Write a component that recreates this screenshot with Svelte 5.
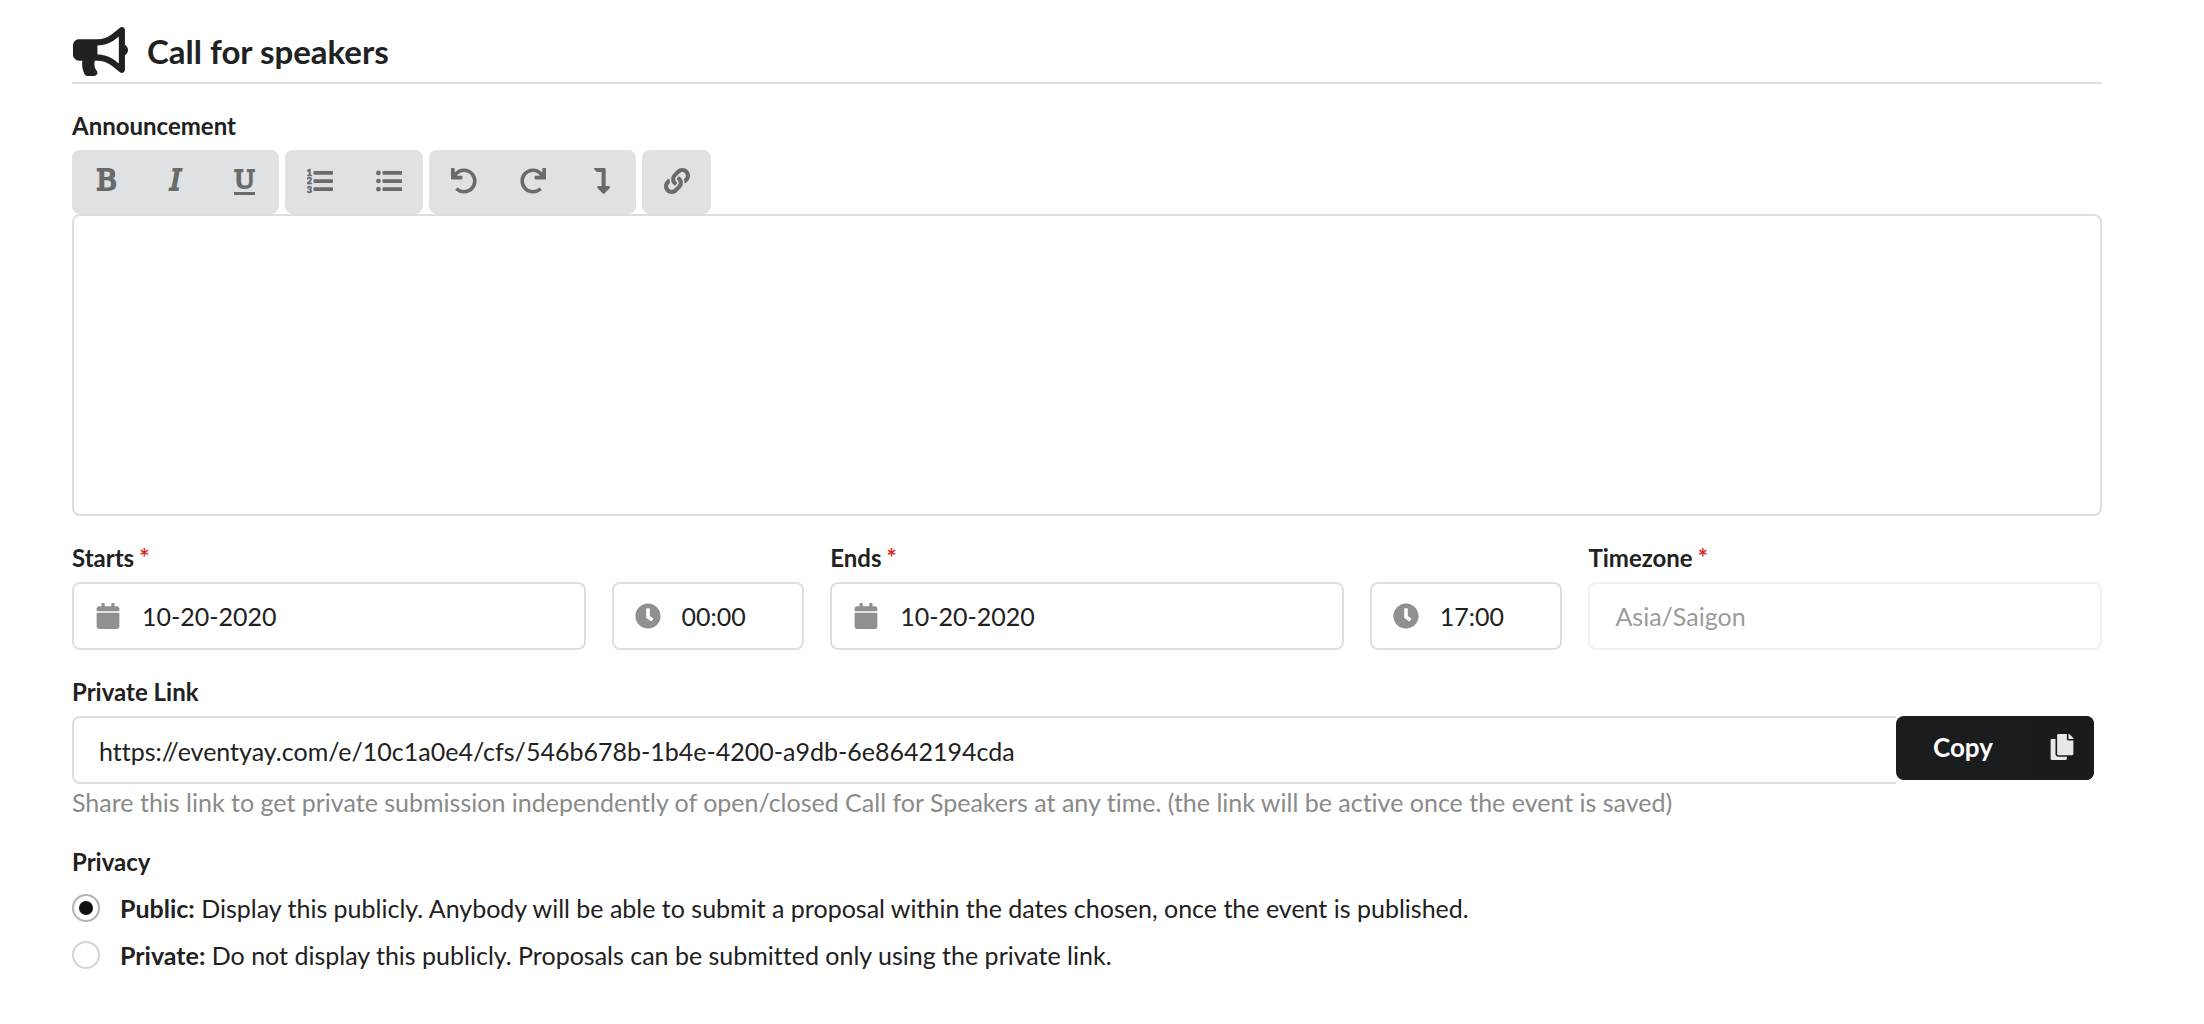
<script lang="ts">
    let announcement = $state('')
    let startDate = $state('10-20-2020')
    let startTime = $state('00:00')
    let endDate = $state('10-20-2020')
    let endTime = $state('17:00')
    let privacy = $state('public')

    const link = 'https://eventyay.com/e/10c1a0e4/cfs/546b678b-1b4e-4200-a9db-6e8642194cda'

    const OPTIONS = [
        { value: 'public',  title: 'Public:',  text: 'Display this publicly. Anybody will be able to submit a proposal within the dates chosen, once the event is published.' },
        { value: 'private', title: 'Private:', text: 'Do not display this publicly. Proposals can be submitted only using the private link.' },
    ]

    const UNDO = 'M212.333 224.333H12c-6.627 0-12-5.373-12-12V12C0 5.373 5.373 0 12 0h48c6.627 0 12 5.373 12 12v78.112C117.773 39.279 184.26 7.47 258.175 8.007c136.906.994 246.448 111.623 246.157 248.532C504.041 393.258 393.12 504 256.333 504c-64.089 0-122.496-24.313-166.51-64.215-5.099-4.622-5.334-12.554-.467-17.42l33.967-33.967c4.474-4.474 11.662-4.717 16.401-.525C170.76 415.336 211.58 432 256.333 432c97.268 0 176-78.716 176-176 0-97.267-78.716-176-176-176-58.496 0-110.28 28.476-142.274 72.333h98.274c6.627 0 12 5.373 12 12v48c0 6.627-5.373 12-12 12z'

    function copyLink() {
        navigator.clipboard?.writeText(link)
    }
</script>

{#snippet calendar()}
    <svg class="icon" viewBox="-32 0 512 512" aria-hidden="true"><path d="M12 192h424c6.6 0 12 5.4 12 12v260c0 26.5-21.5 48-48 48H48c-26.5 0-48-21.5-48-48V204c0-6.6 5.4-12 12-12zm436-44v-36c0-26.5-21.5-48-48-48h-48V12c0-6.6-5.4-12-12-12h-40c-6.6 0-12 5.4-12 12v52H160V12c0-6.6-5.4-12-12-12h-40c-6.6 0-12 5.4-12 12v52H48C21.5 64 0 85.5 0 112v36c0 6.6 5.4 12 12 12h424c6.6 0 12-5.4 12-12z" /></svg>
{/snippet}

{#snippet clock()}
    <svg class="icon" viewBox="0 0 512 512" aria-hidden="true"><path d="M256 8C119 8 8 119 8 256s111 248 248 248 248-111 248-248S393 8 256 8zm57.1 350.1L224.9 294c-3.1-2.3-4.9-5.9-4.9-9.7V116c0-6.6 5.4-12 12-12h48c6.6 0 12 5.4 12 12v137.7l63.5 46.2c5.4 3.9 6.5 11.4 2.6 16.8l-28.2 38.8c-3.9 5.3-11.4 6.5-16.8 2.6z" /></svg>
{/snippet}

<form class="page" onsubmit={(e) => e.preventDefault()}>
    <h3 class="header">
        <svg class="header-icon" viewBox="0 0 576 512" aria-hidden="true"><path d="M576 240c0-23.63-12.95-44.04-32-55.12V32.01C544 23.26 537.02 0 512 0c-7.12 0-14.19 2.38-19.98 7.02l-85.03 68.03C364.28 109.19 310.66 128 256 128H64c-35.35 0-64 28.65-64 64v96c0 35.35 28.65 64 64 64h33.7c-1.39 10.48-2.18 21.14-2.18 32 0 39.77 9.26 77.35 25.56 110.94 5.19 10.69 16.52 17.06 28.4 17.06h74.28c26.05 0 41.69-29.84 25.9-50.56-16.4-21.52-26.15-48.36-26.15-77.44 0-11.11 1.62-21.79 4.41-32H256c54.66 0 108.28 18.81 150.98 52.95l85.03 68.03a32.023 32.023 0 0 0 19.98 7.02c24.92 0 32-22.78 32-32V295.13C563.05 284.04 576 263.63 576 240zm-96 141.42l-33.05-26.44C392.95 311.78 325.12 288 256 288v-96c69.12 0 136.95-23.78 190.95-66.98L480 98.58v282.84z" /></svg>
        Call for speakers
    </h3>

    <div class="field">
        <label for="announcement">Announcement</label>
        <div class="toolbar">
            <div class="group">
                <button type="button" class="tool letter" title="Bold">B</button>
                <button type="button" class="tool letter slanted" title="Italic">I</button>
                <button type="button" class="tool letter" title="Underline"><span class="underlined">U</span></button>
            </div>
            <div class="group">
                <button type="button" class="tool" aria-label="Ordered list">
                    <svg class="icon" viewBox="0 0 512 512">
                        <g class="digits">
                            <text x="44" y="164">1</text>
                            <text x="44" y="324">2</text>
                            <text x="44" y="484">3</text>
                        </g>
                        <rect x="128" y="60" width="384" height="74" rx="16" />
                        <rect x="128" y="220" width="384" height="74" rx="16" />
                        <rect x="128" y="380" width="384" height="74" rx="16" />
                    </svg>
                </button>
                <button type="button" class="tool" aria-label="Unordered list">
                    <svg class="icon" viewBox="0 0 512 512">
                        <circle cx="48" cy="96" r="46" />
                        <circle cx="48" cy="256" r="46" />
                        <circle cx="48" cy="416" r="46" />
                        <rect x="128" y="60" width="384" height="74" rx="16" />
                        <rect x="128" y="220" width="384" height="74" rx="16" />
                        <rect x="128" y="380" width="384" height="74" rx="16" />
                    </svg>
                </button>
            </div>
            <div class="group">
                <button type="button" class="tool" aria-label="Undo">
                    <svg class="icon" viewBox="0 0 512 512"><path d={UNDO} /></svg>
                </button>
                <button type="button" class="tool" aria-label="Redo">
                    <svg class="icon" viewBox="0 0 512 512"><path transform="translate(512 0) scale(-1 1)" d={UNDO} /></svg>
                </button>
                <button type="button" class="tool" aria-label="Line break">
                    <svg class="icon" viewBox="-96 0 512 512"><path d="M313.553 392.331L209.587 504.334c-9.485 10.214-25.676 10.229-35.174 0L70.438 392.331C56.232 377.031 67.062 352 88.025 352H152V80H68.024a11.996 11.996 0 0 1-8.485-3.515l-56-56C-4.021 12.926 1.333 0 12.024 0H208c13.255 0 24 10.745 24 24v328h63.966c20.878 0 31.851 24.969 17.587 40.331z" /></svg>
                </button>
            </div>
            <div class="group">
                <button type="button" class="tool" aria-label="Insert link">
                    <svg class="icon" viewBox="0 0 512 512"><path d="M326.612 185.391c59.747 59.809 58.927 155.698.36 214.59-.11.12-.24.25-.36.37l-67.2 67.2c-59.27 59.27-155.699 59.262-214.96 0-59.27-59.26-59.27-155.7 0-214.96l37.106-37.106c9.84-9.84 26.786-3.3 27.294 10.606.648 17.722 3.826 35.527 9.69 52.721 1.986 5.822.567 12.262-3.783 16.612l-13.087 13.087c-28.026 28.026-28.905 73.66-1.155 101.96 28.024 28.579 74.086 28.749 102.325.51l67.2-67.19c28.191-28.191 28.073-73.757 0-101.83-3.701-3.694-7.429-6.564-10.341-8.569a16.037 16.037 0 0 1-6.947-12.606c-.396-10.567 3.348-21.456 11.698-29.806l21.054-21.055c5.521-5.521 14.182-6.199 20.584-1.731a152.482 152.482 0 0 1 20.522 17.197zM467.547 44.449c-59.261-59.262-155.69-59.27-214.96 0l-67.2 67.2c-.12.12-.25.25-.36.37-58.566 58.892-59.387 154.781.36 214.59a152.454 152.454 0 0 0 20.521 17.196c6.402 4.468 15.064 3.789 20.584-1.731l21.054-21.055c8.35-8.35 12.094-19.239 11.698-29.806a16.037 16.037 0 0 0-6.947-12.606c-2.912-2.005-6.64-4.875-10.341-8.569-28.073-28.073-28.191-73.639 0-101.83l67.2-67.19c28.239-28.239 74.3-28.069 102.325.51 27.75 28.3 26.872 73.934-1.155 101.96l-13.087 13.087c-4.35 4.35-5.769 10.79-3.783 16.612 5.864 17.194 9.042 34.999 9.69 52.721.509 13.906 17.454 20.446 27.294 10.606l37.106-37.106c59.271-59.259 59.271-155.699.001-214.959z" /></svg>
                </button>
            </div>
        </div>
        <textarea id="announcement" bind:value={announcement}></textarea>
    </div>

    <div class="fields">
        <div class="field">
            <label for="start-date">Starts<span class="required">*</span></label>
            <div class="input">
                {@render calendar()}
                <input id="start-date" type="text" bind:value={startDate} />
            </div>
        </div>
        <div class="field">
            <div class="input">
                {@render clock()}
                <input type="text" aria-label="Start time" bind:value={startTime} />
            </div>
        </div>
        <div class="field">
            <label for="end-date">Ends<span class="required">*</span></label>
            <div class="input">
                {@render calendar()}
                <input id="end-date" type="text" bind:value={endDate} />
            </div>
        </div>
        <div class="field">
            <div class="input">
                {@render clock()}
                <input type="text" aria-label="End time" bind:value={endTime} />
            </div>
        </div>
        <div class="field">
            <label for="timezone">Timezone<span class="required">*</span></label>
            <div class="input disabled">
                <input id="timezone" type="text" value="Asia/Saigon" disabled />
            </div>
        </div>
    </div>

    <div class="field">
        <label for="private-link">Private Link</label>
        <div class="action">
            <div class="input joined">
                <input id="private-link" type="text" value={link} readonly />
            </div>
            <button type="button" class="copy" onclick={copyLink}>
                <span class="copy-text">Copy</span>
                <span class="copy-icon">
                    <svg class="icon" viewBox="-32 0 512 512" aria-hidden="true"><path d="M320 448v40c0 13.255-10.745 24-24 24H24c-13.255 0-24-10.745-24-24V120c0-13.255 10.745-24 24-24h72v296c0 30.879 25.121 56 56 56h168zm0-344V0H152c-13.255 0-24 10.745-24 24v368c0 13.255 10.745 24 24 24h272c13.255 0 24-10.745 24-24V128H344c-13.2 0-24-10.8-24-24zm120.971-31.029L375.029 7.029A24 24 0 0 0 358.059 0H352v96h96v-6.059a24 24 0 0 0-7.029-16.97z" /></svg>
                </span>
            </button>
        </div>
        <p class="help">Share this link to get private submission independently of open/closed Call for Speakers at any time. (the link will be active once the event is saved)</p>
    </div>

    <fieldset>
        <legend>Privacy</legend>
        {#each OPTIONS as opt}
            <label class="radio">
                <input type="radio" name="privacy" value={opt.value} bind:group={privacy} />
                <span><b>{opt.title}</b> {opt.text}</span>
            </label>
        {/each}
    </fieldset>
</form>

<style>
    :global(body) { background: #fff; }

    .page {
        padding: 24px 102px 40px 72px;
        font-family: Lato, "Open Sans", sans-serif;
        font-size: 25px;
        font-variant-ligatures: none;
        line-height: 36px;
        color: #212121;
    }
    button, input, textarea { font: inherit; font-variant-ligatures: none; color: inherit; }

    .icon {
        width: 26px;
        height: 26px;
        flex: none;
        fill: currentColor;
    }

    .header {
        display: flex;
        align-items: center;
        gap: 19px;
        margin: 0 0 24px;
        padding: 0 0 4px 1px;
        border-bottom: 2px solid #dedede;
        font-size: 33px;
        font-weight: 700;
        line-height: 54px;
    }
    .header-icon { width: 55px; height: 49px; fill: currentColor; }

    .field { margin-bottom: 24px; }
    .field > label, legend {
        display: block;
        margin-bottom: 6px;
        padding: 0;
        font-size: 24px;
        font-weight: 700;
        line-height: 36px;
    }
    .required { margin-left: 5px; color: #db2828; }

    .toolbar { display: flex; gap: 6px; }
    .group {
        display: flex;
        border-radius: 8px;
        background: #e0e1e2;
    }
    .tool {
        display: flex;
        align-items: center;
        justify-content: center;
        width: 69px;
        height: 64px;
        padding: 0 0 2px;
        border: 0;
        background: none;
        color: #696a6a;
        cursor: pointer;
    }
    .letter {
        font-family: "DejaVu Serif", serif;
        font-size: 28px;
        line-height: 30px;
        -webkit-text-stroke: 2px currentColor;
    }
    .slanted { font-style: italic; }
    .underlined {
        border-bottom: 3px solid;
        font-size: 25px;
        line-height: 24px;
    }
    .digits {
        font-family: Lato, sans-serif;
        font-size: 190px;
        font-weight: 900;
        text-anchor: middle;
        stroke: currentColor;
        stroke-width: 10px;
    }

    textarea {
        display: block;
        box-sizing: border-box;
        width: 100%;
        height: 302px;
        padding: 18px 26px;
        border: 2px solid #dedede;
        border-radius: 8px;
        background: #fff;
        resize: none;
    }

    .fields {
        display: grid;
        grid-template-columns: minmax(0, 8fr) minmax(0, 3fr) minmax(0, 8fr) minmax(0, 3fr) minmax(0, 8fr);
        align-items: end;
        column-gap: 26px;
    }
    .input {
        display: flex;
        align-items: center;
        box-sizing: border-box;
        height: 68px;
        padding: 0 0 0 21px;
        border: 2px solid #dedede;
        border-radius: 8px;
        background: #fff;
    }
    .input .icon { color: #909090; }
    .input input {
        flex: 1;
        min-width: 0;
        height: 64px;
        box-sizing: border-box;
        padding: 0 21px;
        border: 0;
        background: none;
        outline: none;
    }
    .input.disabled, .input.joined { padding: 0 0 0 4px; }
    .input.disabled { border-color: #f0f0f0; color: #9b9b9b; }

    .action {
        display: flex;
        align-items: flex-start;
        padding-right: 8px;
    }
    .joined {
        flex: 1;
        border-right: 0;
        border-radius: 8px 0 0 8px;
    }
    .joined input { padding-top: 2px; }
    .copy {
        display: flex;
        align-items: stretch;
        height: 64px;
        padding: 0;
        border: 0;
        border-radius: 8px;
        overflow: hidden;
        background: #1b1c1d;
        color: #fff;
        font-size: 26px;
        font-weight: 700;
        line-height: 62px;
        cursor: pointer;
    }
    .copy-text { width: 134px; text-align: center; }
    .copy-icon {
        display: flex;
        align-items: center;
        justify-content: center;
        width: 64px;
        padding-bottom: 2px;
        background: #1a1b1c;
        color: #e8e8e8;
    }
    .help { margin: 0; color: #8a8a8a; }

    fieldset { margin: 0; padding: 0; border: 0; }
    fieldset legend { margin-bottom: 10px; }
    .radio {
        display: flex;
        align-items: center;
        gap: 20px;
        margin-bottom: 11px;
        cursor: pointer;
    }
    .radio input {
        display: grid;
        place-items: center;
        box-sizing: border-box;
        width: 28px;
        height: 28px;
        flex: none;
        margin: 0;
        appearance: none;
        border: 2px solid #d4d4d5;
        border-radius: 50%;
        background: #fff;
    }
    .radio input:checked { border-color: #b3b3b3; }
    .radio input:checked::before {
        content: '';
        width: 14px;
        height: 14px;
        border-radius: 50%;
        background: #111;
    }
</style>
